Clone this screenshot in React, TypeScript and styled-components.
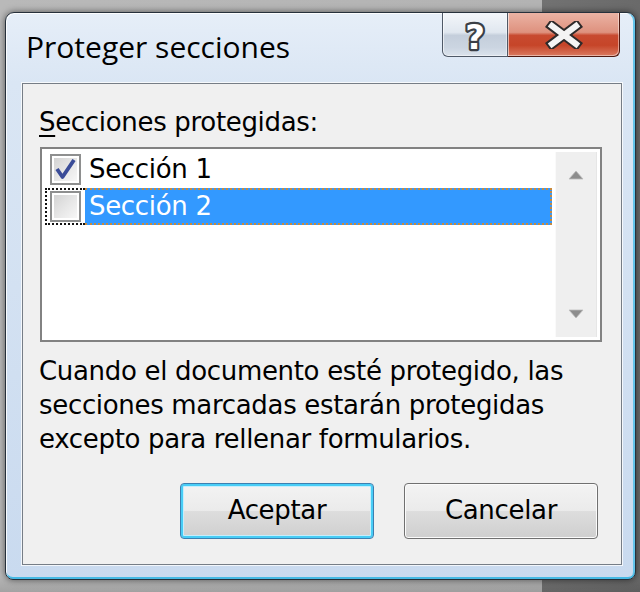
import React from 'react'
import styled, { createGlobalStyle } from 'styled-components'

// Diálogo "Proteger secciones" estilo Windows Vista

const GlobalStyle = createGlobalStyle`
  html, body { margin: 0; padding: 0; }
  body { width: 640px; height: 592px; overflow: hidden; background: #9c9c9c; }
`

const UI_FONT = `"DejaVu Sans", "Liberation Sans", sans-serif`
const TITLE_FONT = `"Open Sans", "Noto Sans", sans-serif`

// css
const Desktop = styled.div`
  width: 640px;
  height: 592px;
  box-sizing: border-box;
  padding: 12px 4px 12px 5px;
  display: flex;
  background:
    linear-gradient(to bottom, rgba(0, 0, 0, 0) 0, rgba(0, 0, 0, 0) 575px, rgba(0, 0, 0, 0.12) 592px),
    linear-gradient(to right, #b9b9b9 0, #b3b3b3 542px, #727272 542px, #6a6a6a 100%);
`

const Window = styled.div`
  flex: 1;
  display: flex;
  flex-direction: column;
  box-sizing: border-box;
  padding: 0 13px 14px 16px;
  border: 1px solid #26303b;
  border-radius: 9px 9px 8px 8px;
  background: linear-gradient(to bottom, #e6eef8 0, #dae6f4 70px, #c9daef 100%);
  box-shadow:
    0 0 7px rgba(0, 0, 0, 0.55),
    inset 1px 1px 0 rgba(255, 255, 255, 0.85),
    inset 0 -2px 0 #45b9e4,
    inset -2px 0 0 #62c4ea;
`

const TitleBar = styled.div`
  height: 70px;
  display: flex;
  align-items: flex-start;
  margin-right: 2px;
`

const Title = styled.div`
  flex: 1;
  margin-top: 18px;
  padding-left: 4px;
  font-family: ${TITLE_FONT};
  font-size: 30px;
  line-height: 32px;
  color: #000;
`

const CaptionButton = styled.div<{ $kind: 'help' | 'close' }>`
  height: 44px;
  width: ${p => (p.$kind === 'help' ? '66px' : '112px')};
  box-sizing: border-box;
  display: flex;
  align-items: center;
  justify-content: center;
  border: 1px solid ${p => (p.$kind === 'help' ? '#4f5967' : '#4f1a12')};
  border-top: none;
  border-radius: ${p => (p.$kind === 'help' ? '0 0 0 6px' : '0 0 6px 0')};
  ${p => (p.$kind === 'close' ? 'border-left: none;' : '')}
  background: ${p =>
    p.$kind === 'help'
      ? 'linear-gradient(to bottom, #f3f6fa 0%, #e0e7ef 45%, #c4cedb 52%, #cbd5e1 80%, #dbe3ec 100%)'
      : 'linear-gradient(to bottom, #ebb3a4 0%, #de917e 45%, #c84a30 52%, #c64529 75%, #da7a60 100%)'};
  box-shadow: inset 1px 0 0 rgba(255, 255, 255, 0.6), inset -1px -1px 0 rgba(255, 255, 255, 0.45);
`

const Client = styled.div`
  flex: 1;
  display: flex;
  flex-direction: column;
  box-sizing: border-box;
  padding: 20px 0 0 16px;
  background: #f0f0f0;
  border: 1px solid #767d86;
  box-shadow: 0 0 0 1px rgba(255, 255, 255, 0.75);
  font-family: ${UI_FONT};
  font-size: 26px;
  letter-spacing: -0.32px;
  line-height: 34px;
  color: #000;
`

const Label = styled.div`
  padding-top: 1px;
  u { text-decoration-thickness: 2px; text-underline-offset: 4px; }
`

const ListBox = styled.div`
  margin: 8px 19px 0 1px;
  height: 195px;
  box-sizing: border-box;
  border: 2px solid #828282;
  background: #fff;
  padding: 2px 3px;
  display: flex;
`

const Items = styled.div`
  flex: 1;
  display: flex;
  flex-direction: column;
`

const Row = styled.div`
  height: 37px;
  display: flex;
`

const CheckCell = styled.div<{ $focused?: boolean }>`
  width: 40px;
  box-sizing: border-box;
  display: flex;
  align-items: center;
  padding-left: 5px;
  ${p => (p.$focused ? 'border: 2px dotted #111; border-right: none; padding-left: 3px;' : '')}
`

const ItemText = styled.div<{ $selected?: boolean }>`
  flex: 1;
  box-sizing: border-box;
  padding-left: 4px;
  line-height: 33px;
  color: ${p => (p.$selected ? '#fff' : '#000')};
  background: ${p => (p.$selected ? '#3399ff' : 'transparent')};
  ${p => (p.$selected ? 'border: 2px dotted #c98a3c; border-left: none;' : 'padding-top: 2px;')}
`

const Box = styled.div`
  width: 31px;
  height: 31px;
  box-sizing: border-box;
  border: 2px solid #8e8f8f;
  padding: 2px;
  background: #fff;
  display: flex;
`

const BoxInner = styled.div`
  flex: 1;
  display: flex;
  align-items: center;
  justify-content: center;
  background: linear-gradient(135deg, #d3d3d3 0%, #e6e6e6 50%, #f7f7f7 100%);
`

const ScrollBar = styled.div`
  width: 42px;
  margin: 1px 0 1px 3px;
  display: flex;
  flex-direction: column;
  justify-content: space-between;
  background: #efefef;
  box-shadow: inset 1px 0 0 #fafafa, inset -1px 0 0 #e6e6e6;
`

const ArrowButton = styled.div`
  height: 46px;
  display: flex;
  align-items: center;
  justify-content: center;
`

const Description = styled.div`
  margin-top: 12px;
`

const Footer = styled.div`
  margin-top: 27px;
  padding-right: 23px;
  display: flex;
  justify-content: flex-end;
  gap: 30px;
`

const PushButton = styled.div<{ $default?: boolean }>`
  width: 194px;
  height: 56px;
  box-sizing: border-box;
  display: flex;
  align-items: center;
  justify-content: center;
  border-radius: 4px;
  border: 1px solid ${p => (p.$default ? '#3c7fb1' : '#707070')};
  background: linear-gradient(to bottom, #f3f3f3 0%, #ebebeb 49%, #dddddd 51%, #cfcfcf 100%);
  box-shadow: ${p =>
    p.$default
      ? 'inset 0 0 0 2px #48cdf6, inset 0 0 0 3px #c6eefc'
      : 'inset 0 0 0 1px #fbfbfb'};
  padding-bottom: 2px;
`

// template

const CheckBox: React.FC<{ checked?: boolean }> = ({ checked }) => (
  <Box>
    <BoxInner>
      {checked && (
        <svg width="21" height="21" viewBox="0 0 21 21">
          <path d="M2 10 L7.5 18 L19 1" fill="none" stroke="#3a4c98" strokeWidth="3.8" strokeLinejoin="round" />
        </svg>
      )}
    </BoxInner>
  </Box>
)

const Arrow: React.FC<{ down?: boolean }> = ({ down }) => (
  <svg width="16" height="10" viewBox="0 0 16 10">
    <path
      d={down ? 'M1 1 L15 1 L8 9 Z' : 'M1 9 L15 9 L8 1 Z'}
      fill="#8d8d8d"
      stroke="#bdbdbd"
      strokeWidth="0.8"
    />
  </svg>
)

// signo de ayuda: contorno oscuro detrás, relleno blanco encima
const HelpGlyph = () => (
  <svg width="32" height="42" viewBox="0 0 32 42" fontFamily='"DejaVu Sans", sans-serif' fontWeight="bold" fontSize="34">
    <text x="16" y="35" textAnchor="middle" fill="#3a3f46" stroke="#3a3f46" strokeWidth="4.5" strokeLinejoin="round">
      ?
    </text>
    <text x="16" y="35" textAnchor="middle" fill="#ffffff">
      ?
    </text>
  </svg>
)

const CloseGlyph = () => (
  <svg width="38" height="28" viewBox="0 0 38 28">
    <path d="M7 5 L31 23 M31 5 L7 23" stroke="#2e2a2a" strokeWidth="10" strokeLinecap="square" />
    <path d="M7 5 L31 23 M31 5 L7 23" stroke="#f4f4f4" strokeWidth="6" strokeLinecap="square" />
  </svg>
)

const App: React.FC = () => {
  const sections = [
    { id: 1, title: 'Sección 1', checked: true },
    { id: 2, title: 'Sección 2', checked: false },
  ]
  const current = 2

  return (
    <>
      <GlobalStyle />
      <Desktop>
        <Window>
          <TitleBar>
            <Title>Proteger secciones</Title>
            <CaptionButton $kind="help">
              <HelpGlyph />
            </CaptionButton>
            <CaptionButton $kind="close">
              <CloseGlyph />
            </CaptionButton>
          </TitleBar>
          <Client>
            <Label>
              <u>S</u>ecciones protegidas:
            </Label>
            <ListBox>
              <Items>
                {sections.map(s => (
                  <Row key={s.id}>
                    <CheckCell $focused={s.id === current}>
                      <CheckBox checked={s.checked} />
                    </CheckCell>
                    <ItemText $selected={s.id === current}>{s.title}</ItemText>
                  </Row>
                ))}
              </Items>
              <ScrollBar>
                <ArrowButton>
                  <Arrow />
                </ArrowButton>
                <ArrowButton>
                  <Arrow down />
                </ArrowButton>
              </ScrollBar>
            </ListBox>
            <Description>
              Cuando el documento esté protegido, las
              <br />
              secciones marcadas estarán protegidas
              <br />
              excepto para rellenar formularios.
            </Description>
            <Footer>
              <PushButton $default>Aceptar</PushButton>
              <PushButton>Cancelar</PushButton>
            </Footer>
          </Client>
        </Window>
      </Desktop>
    </>
  )
}

export default App
